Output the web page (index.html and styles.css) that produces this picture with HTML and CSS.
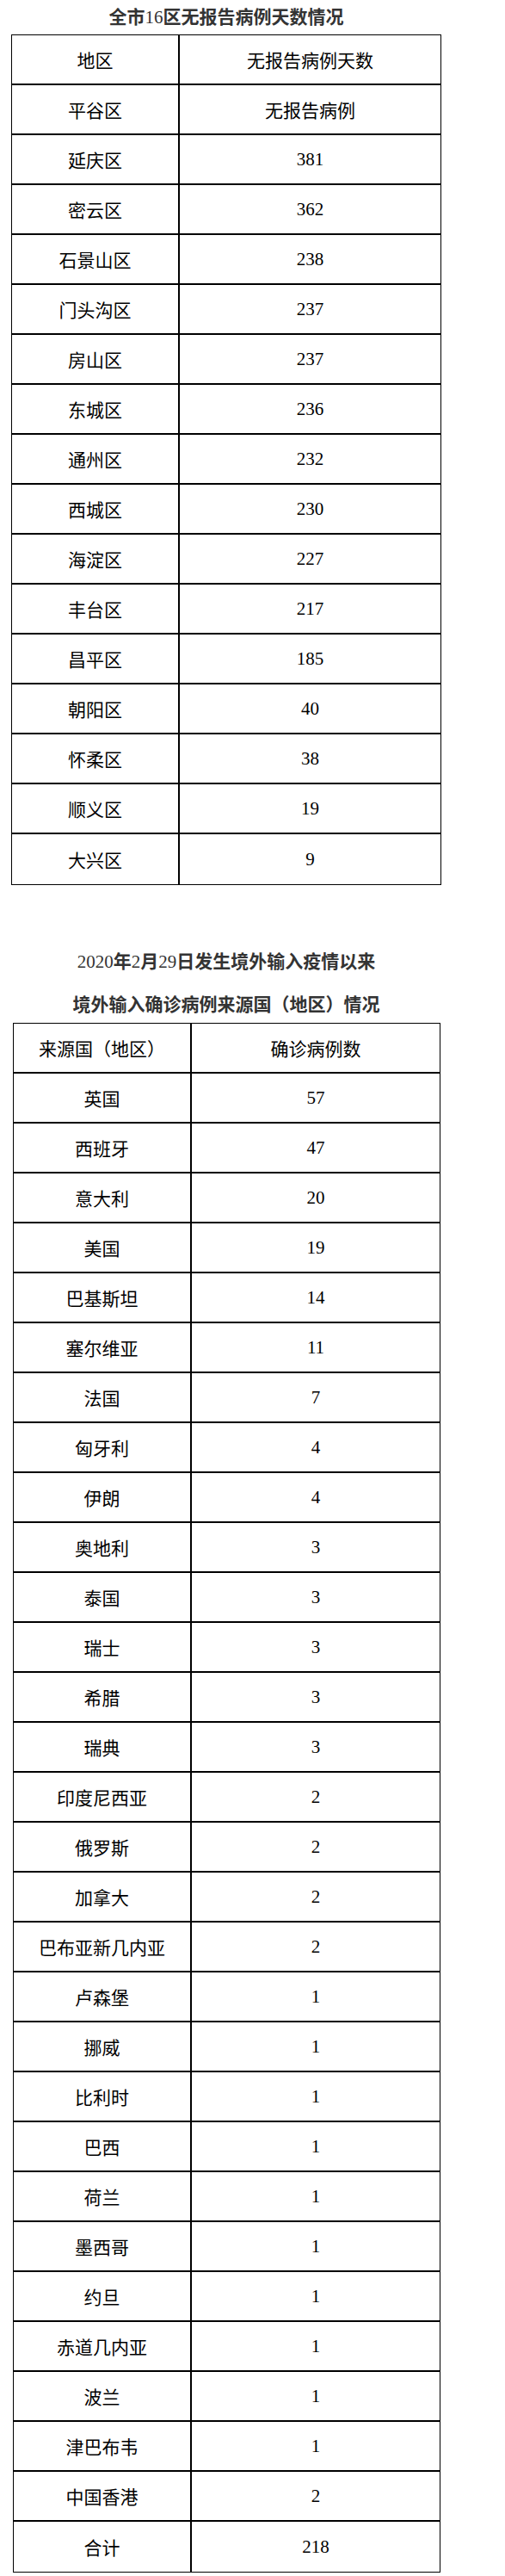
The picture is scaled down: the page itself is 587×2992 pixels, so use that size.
FILE: index.html
```html
<!DOCTYPE html>
<html lang="zh-CN">
<head>
<meta charset="utf-8">
<title>全市16区无报告病例天数情况</title>
<link rel="stylesheet" href="styles.css">
</head>
<body>
<div class="page">
  <h2 class="title t1-title">全市<span class="num">16</span>区无报告病例天数情况</h2>
  <table class="grid t1">
    <tbody>
      <tr><td>地区</td><td>无报告病例天数</td></tr>
      <tr><td>平谷区</td><td>无报告病例</td></tr>
      <tr><td>延庆区</td><td>381</td></tr>
      <tr><td>密云区</td><td>362</td></tr>
      <tr><td>石景山区</td><td>238</td></tr>
      <tr><td>门头沟区</td><td>237</td></tr>
      <tr><td>房山区</td><td>237</td></tr>
      <tr><td>东城区</td><td>236</td></tr>
      <tr><td>通州区</td><td>232</td></tr>
      <tr><td>西城区</td><td>230</td></tr>
      <tr><td>海淀区</td><td>227</td></tr>
      <tr><td>丰台区</td><td>217</td></tr>
      <tr><td>昌平区</td><td>185</td></tr>
      <tr><td>朝阳区</td><td>40</td></tr>
      <tr><td>怀柔区</td><td>38</td></tr>
      <tr><td>顺义区</td><td>19</td></tr>
      <tr><td>大兴区</td><td>9</td></tr>
    </tbody>
  </table>

  <h2 class="title t2-title-a"><span class="num">2020</span>年<span class="num">2</span>月<span class="num">29</span>日发生境外输入疫情以来</h2>
  <h2 class="title t2-title-b">境外输入确诊病例来源国（地区）情况</h2>
  <table class="grid t2">
    <tbody>
      <tr><td>来源国（地区）</td><td>确诊病例数</td></tr>
      <tr><td>英国</td><td>57</td></tr>
      <tr><td>西班牙</td><td>47</td></tr>
      <tr><td>意大利</td><td>20</td></tr>
      <tr><td>美国</td><td>19</td></tr>
      <tr><td>巴基斯坦</td><td>14</td></tr>
      <tr><td>塞尔维亚</td><td>11</td></tr>
      <tr><td>法国</td><td>7</td></tr>
      <tr><td>匈牙利</td><td>4</td></tr>
      <tr><td>伊朗</td><td>4</td></tr>
      <tr><td>奥地利</td><td>3</td></tr>
      <tr><td>泰国</td><td>3</td></tr>
      <tr><td>瑞士</td><td>3</td></tr>
      <tr><td>希腊</td><td>3</td></tr>
      <tr><td>瑞典</td><td>3</td></tr>
      <tr><td>印度尼西亚</td><td>2</td></tr>
      <tr><td>俄罗斯</td><td>2</td></tr>
      <tr><td>加拿大</td><td>2</td></tr>
      <tr><td>巴布亚新几内亚</td><td>2</td></tr>
      <tr><td>卢森堡</td><td>1</td></tr>
      <tr><td>挪威</td><td>1</td></tr>
      <tr><td>比利时</td><td>1</td></tr>
      <tr><td>巴西</td><td>1</td></tr>
      <tr><td>荷兰</td><td>1</td></tr>
      <tr><td>墨西哥</td><td>1</td></tr>
      <tr><td>约旦</td><td>1</td></tr>
      <tr><td>赤道几内亚</td><td>1</td></tr>
      <tr><td>波兰</td><td>1</td></tr>
      <tr><td>津巴布韦</td><td>1</td></tr>
      <tr><td>中国香港</td><td>2</td></tr>
      <tr><td>合计</td><td>218</td></tr>
    </tbody>
  </table>
</div>
</body>
</html>
```

FILE: styles.css
```css
html, body {
  margin: 0;
  padding: 0;
  background: #fff;
}

body {
  font-family: "Liberation Serif", "Noto Sans CJK SC", serif;
  color: #000;
}

.page {
  width: 500px;
  margin-left: 13px;
}

.title {
  margin: 0;
  font-size: 21px;
  font-weight: bold;
  color: #333;
  text-align: center;
  white-space: nowrap;
}

.title .num {
  font-weight: normal;
}

.t1-title {
  height: 40px;
  line-height: 40px;
}

.t2-title-a {
  margin-top: 64px;
  height: 50px;
  line-height: 50px;
}

.t2-title-b {
  margin-top: 4px;
  height: 42px;
  line-height: 42px;
}

.grid {
  border-collapse: separate;
  border-spacing: 0;
  border: 1px solid #000;
  table-layout: fixed;
}

.grid td {
  box-sizing: border-box;
  height: 58px;
  padding: 0;
  font-size: 21px;
  text-align: center;
  vertical-align: middle;
  border-bottom: 2px solid #000;
  white-space: nowrap;
}

.grid tr:last-child td {
  border-bottom: none;
}

.grid td:first-child {
  border-right: 2px solid #000;
}

.t1 {
  width: 500px;
}

.t1 td:first-child {
  width: 195px;
}

.t2 {
  width: 497px;
  margin-left: 2px;
}

.t2 td:first-child {
  width: 207px;
}
```
